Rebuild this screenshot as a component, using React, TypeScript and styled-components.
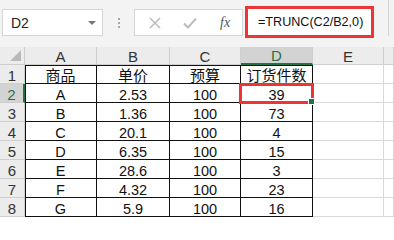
import styled, { createGlobalStyle } from "styled-components";

const GlobalStyle = createGlobalStyle`
  html, body {
    margin: 0;
    padding: 0;
    background: #ffffff;
  }
  body {
    font-family: "Liberation Sans", "Noto Sans CJK SC", sans-serif;
    overflow: hidden;
  }
  * {
    box-sizing: border-box;
  }
`;

const COLUMNS = ["A", "B", "C", "D", "E"];
const COL_WIDTHS = "25px 72px 73px 71px 72px 71px 10px";

const ROWS: string[][] = [
  ["商品", "单价", "预算", "订货件数"],
  ["A", "2.53", "100", "39"],
  ["B", "1.36", "100", "73"],
  ["C", "20.1", "100", "4"],
  ["D", "6.35", "100", "15"],
  ["E", "28.6", "100", "3"],
  ["F", "4.32", "100", "23"],
  ["G", "5.9", "100", "16"],
];

const Sheet = styled.div`
  width: 394px;
  height: 218px;
  overflow: hidden;
  background: #ffffff;
`;

const Toolbar = styled.div`
  display: flex;
  align-items: flex-start;
  height: 47px;
  padding: 9px 0 0 2px;
  background: #f3f3f3;
`;

const NameBox = styled.div`
  display: flex;
  align-items: center;
  justify-content: space-between;
  width: 101px;
  height: 27px;
  padding: 0 6px 0 8px;
  background: #ffffff;
  border: 1px solid #d6d6d6;
  font-size: 14px;
  color: #222;
`;

const DropArrow = styled.span`
  width: 0;
  height: 0;
  border-left: 4px solid transparent;
  border-right: 4px solid transparent;
  border-top: 4px solid #777;
`;

const Grip = styled.div`
  display: flex;
  flex-direction: column;
  gap: 2px;
  width: 31px;
  height: 27px;
  align-items: center;
  justify-content: center;

  span {
    width: 2px;
    height: 2px;
    background: #a8a8a8;
  }
`;

const ActionBox = styled.div`
  display: flex;
  align-items: center;
  width: 109px;
  height: 27px;
  padding-left: 13px;
  gap: 20px;
  background: #ffffff;
  border: 1px solid #d6d6d6;
`;

const Fx = styled.span`
  font-family: "Liberation Serif", serif;
  font-style: italic;
  font-size: 14px;
  color: #555;
  margin-left: 2px;
`;

const FormulaBox = styled.div`
  display: flex;
  align-items: center;
  width: 129px;
  height: 32px;
  margin: -3px 0 0 2px;
  padding-left: 10px;
  background: #ffffff;
  border: 3px solid #ee3535;
  font-size: 12.6px;
  color: #111;
  white-space: nowrap;
`;

const EdgeLine = styled.div`
  width: 1px;
  height: 36px;
  margin: -9px 0 0 14px;
  background: #d6d6d6;
`;

const Grid = styled.div`
  display: grid;
  grid-template-columns: ${COL_WIDTHS};
  grid-template-rows: 18px repeat(8, 19px);
`;

const Corner = styled.div`
  position: relative;
  background: #ececec;
  border-right: 1px solid #cfcfcf;
  border-bottom: 1px solid #cfcfcf;

  &::after {
    content: "";
    position: absolute;
    right: 3px;
    bottom: 3px;
    width: 0;
    height: 0;
    border-left: 11px solid transparent;
    border-bottom: 11px solid #b9b9b9;
  }
`;

const ColHeader = styled.div<{ $active?: boolean }>`
  display: flex;
  align-items: center;
  justify-content: center;
  padding-top: 1px;
  font-size: 15px;
  color: ${(p) => (p.$active ? "#217346" : "#333")};
  background: ${(p) => (p.$active ? "#d3d3d3" : "#ececec")};
  border-right: 1px solid #cfcfcf;
  border-bottom: ${(p) => (p.$active ? "2px solid #217346" : "1px solid #cfcfcf")};
`;

const RowHeader = styled.div<{ $active?: boolean }>`
  display: flex;
  align-items: center;
  justify-content: center;
  padding-top: 2px;
  font-size: 15px;
  color: ${(p) => (p.$active ? "#217346" : "#333")};
  background: ${(p) => (p.$active ? "#d3d3d3" : "#ececec")};
  border-right: ${(p) => (p.$active ? "2px solid #217346" : "1px solid #cfcfcf")};
  border-bottom: 1px solid #cfcfcf;
`;

const Cell = styled.div<{ $boxed?: boolean; $top?: boolean; $left?: boolean }>`
  display: flex;
  align-items: center;
  justify-content: center;
  padding-top: 3px;
  font-size: 14.5px;
  color: #111;
  white-space: nowrap;
  border-right: 1px solid ${(p) => (p.$boxed ? "#111" : "#d9d9d9")};
  border-bottom: 1px solid ${(p) => (p.$boxed ? "#111" : "#d9d9d9")};
  box-shadow: ${(p) =>
    [p.$top ? "inset 0 1px 0 #111" : "", p.$left ? "inset 1px 0 0 #111" : ""]
      .filter(Boolean)
      .join(", ") || "none"};
`;

const CjkText = styled.span`
  font-family: "Noto Sans CJK SC", sans-serif;
  font-size: 15px;
  line-height: 1;
  margin-top: -3px;
`;

const ActiveCell = styled(Cell)`
  position: relative;

  &::before {
    content: "";
    position: absolute;
    left: -2px;
    top: -1px;
    right: -2px;
    bottom: -2px;
    border: 3px solid #ee3535;
  }

  &::after {
    content: "";
    position: absolute;
    right: -3px;
    bottom: -3px;
    width: 5px;
    height: 5px;
    background: #217346;
    border: 1px solid #ffffff;
  }
`;

function CloseIcon() {
  return (
    <svg width="14" height="14" viewBox="0 0 14 14">
      <path d="M2 2 L12 12 M12 2 L2 12" stroke="#bdbdbd" strokeWidth="1.6" />
    </svg>
  );
}

function CheckIcon() {
  return (
    <svg width="16" height="14" viewBox="0 0 16 14">
      <path d="M2 7.5 L6 11.5 L14 2.5" stroke="#bdbdbd" strokeWidth="2" fill="none" />
    </svg>
  );
}

export default function App() {
  return (
    <>
      <GlobalStyle />
      <Sheet>
        <Toolbar>
          <NameBox>
            D2
            <DropArrow />
          </NameBox>
          <Grip>
            <span />
            <span />
            <span />
          </Grip>
          <ActionBox>
            <CloseIcon />
            <CheckIcon />
            <Fx>fx</Fx>
          </ActionBox>
          <FormulaBox>=TRUNC(C2/B2,0)</FormulaBox>
          <EdgeLine />
        </Toolbar>
        <Grid>
          <Corner />
          {COLUMNS.map((col) => (
            <ColHeader key={col} $active={col === "D"}>
              {col}
            </ColHeader>
          ))}
          <ColHeader />
          {ROWS.map((row, r) => (
            <RowCells key={r} row={row} index={r} />
          ))}
        </Grid>
      </Sheet>
    </>
  );
}

function RowCells({ row, index }: { row: string[]; index: number }) {
  const rowNum = index + 1;
  return (
    <>
      <RowHeader $active={rowNum === 2}>{rowNum}</RowHeader>
      {row.map((value, c) => {
        const props = { $boxed: true, $top: index === 0, $left: c === 0 };
        const content = index === 0 ? <CjkText>{value}</CjkText> : value;
        if (rowNum === 2 && c === 3) {
          return (
            <ActiveCell key={c} {...props}>
              {content}
            </ActiveCell>
          );
        }
        return (
          <Cell key={c} {...props}>
            {content}
          </Cell>
        );
      })}
      <Cell />
      <Cell />
    </>
  );
}
